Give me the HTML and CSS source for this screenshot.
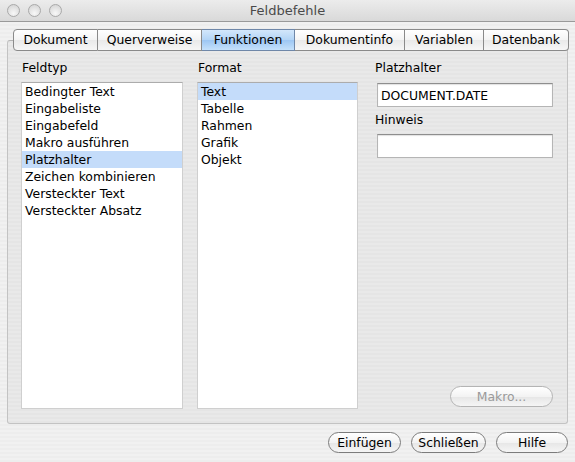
FILE: index.html
```html
<!DOCTYPE html>
<html lang="de">
<head>
<meta charset="utf-8">
<title>Feldbefehle</title>
<link rel="stylesheet" href="styles.css">
</head>
<body>
<div class="window">
  <div class="titlebar">
    <div class="lights">
      <span class="light"></span><span class="light"></span><span class="light"></span>
    </div>
    <div class="title">Feldbefehle</div>
    <div></div>
  </div>
  <div class="content">
    <div class="tabs">
      <div class="tab t1">Dokument</div>
      <div class="tab t2">Querverweise</div>
      <div class="tab t3 active">Funktionen</div>
      <div class="tab t4">Dokumentinfo</div>
      <div class="tab t5">Variablen</div>
      <div class="tab t6">Datenbank</div>
    </div>
    <div class="panel">
      <div class="col col1">
        <div class="label">Feldtyp</div>
        <ul class="list">
          <li>Bedingter Text</li>
          <li>Eingabeliste</li>
          <li>Eingabefeld</li>
          <li>Makro ausführen</li>
          <li class="sel">Platzhalter</li>
          <li>Zeichen kombinieren</li>
          <li>Versteckter Text</li>
          <li>Versteckter Absatz</li>
        </ul>
      </div>
      <div class="col col2">
        <div class="label">Format</div>
        <ul class="list">
          <li class="sel">Text</li>
          <li>Tabelle</li>
          <li>Rahmen</li>
          <li>Grafik</li>
          <li>Objekt</li>
        </ul>
      </div>
      <div class="col col3">
        <div class="label">Platzhalter</div>
        <div class="field">DOCUMENT.DATE</div>
        <div class="label label2">Hinweis</div>
        <div class="field"></div>
        <button class="btn makro" disabled>Makro...</button>
      </div>
    </div>
    <div class="buttons">
      <button class="btn b-einf">Einfügen</button>
      <button class="btn b-schl">Schließen</button>
      <button class="btn b-hilfe">Hilfe</button>
    </div>
  </div>
</div>
</body>
</html>
```

FILE: styles.css
```css
* { box-sizing: border-box; }
html, body {
  margin: 0;
  padding: 0;
  width: 575px;
  height: 462px;
  overflow: hidden;
}
body {
  font-family: "DejaVu Sans", "Liberation Sans", sans-serif;
  font-size: 12px;
  color: #000;
}
.window {
  width: 575px;
  height: 462px;
  background: repeating-linear-gradient(to bottom, #ededed 0, #ededed 2px, #f1f1f1 2px, #f1f1f1 4px);
  display: flex;
  flex-direction: column;
}
.titlebar {
  height: 22px;
  display: grid;
  grid-template-columns: 1fr auto 1fr;
  align-items: center;
  background: linear-gradient(to bottom, #ececec, #d9d9d9);
  border-bottom: 1px solid #9a9a9a;
}
.lights {
  display: flex;
  gap: 8px;
  padding-left: 7px;
  padding-bottom: 1px;
}
.light {
  width: 13px;
  height: 13px;
  border-radius: 50%;
  border: 1px solid #a9a9a9;
  background: radial-gradient(circle at 50% 75%, #f8f8f8 0, #e2e2e2 55%, #cfcfcf 100%);
}
.title {
  font-size: 13px;
  color: #4a4a4a;
  padding-bottom: 1px;
}
.content {
  flex: 1;
  display: flex;
  flex-direction: column;
}
.tabs {
  display: flex;
  margin: 7px 0 -11px 13px;
  height: 22px;
  position: relative;
  z-index: 1;
}
.tab {
  height: 22px;
  border: 1px solid #8a8a8a;
  border-left: none;
  background: linear-gradient(to bottom, #ffffff 0%, #f4f4f4 50%, #e9e9e9 51%, #f6f6f6 100%);
  display: flex;
  align-items: center;
  justify-content: center;
  font-size: 12.4px;
  padding-bottom: 1px;
}
.tab.t1 { width: 85px; border-left: 1px solid #8a8a8a; border-radius: 4px 0 0 4px; }
.tab.t2 { width: 104px; }
.tab.t3 { width: 93px; }
.tab.t4 { width: 110px; }
.tab.t5 { width: 79px; }
.tab.t6 { width: 85px; border-radius: 0 4px 4px 0; }
.tab.active {
  background: linear-gradient(to bottom, #d3e7fb 0%, #b2d4f6 50%, #9cc6f3 51%, #c5e1fb 100%);
  border-color: #6f87a8;
}
.panel {
  margin: 0 7px 0 7px;
  height: 384px;
  border: 1px solid #c3c3c3;
  border-top-color: #b3b3b3;
  border-radius: 3px;
  background: repeating-linear-gradient(to bottom, #e5e5e5 0, #e5e5e5 2px, #e9e9e9 2px, #e9e9e9 4px);
  display: grid;
  grid-template-columns: 162px 161px 181px;
  column-gap: 14px;
  padding: 19px 0 14px 13px;
}
.col3 { padding-left: 5px; }
.col {
  display: flex;
  flex-direction: column;
}
.label {
  font-size: 12.4px;
  height: 22px;
  padding-left: 1px;
}
.col3 .label { padding-left: 0; margin-left: -2px; }
.list {
  list-style: none;
  margin: 0;
  padding: 0;
  flex: 1;
  background: #fff;
  border: 1px solid #cfcfcf;
  border-top-color: #acacac;
}
.list li {
  height: 17px;
  line-height: 17px;
  padding-left: 3px;
  white-space: nowrap;
  font-size: 12.4px;
}
.list li.sel { background: #c4dcfa; }
.field {
  height: 24px;
  margin-top: 1px;
  background: #fff;
  border: 1px solid #b5b5b5;
  border-top-color: #8e8e8e;
  box-shadow: inset 0 1px 1px rgba(0,0,0,0.12);
  padding: 4px 3px 0 3px;
  font-size: 12.4px;
}
.label2 { height: 26px; padding-top: 5px; }
.btn {
  font-family: "DejaVu Sans", "Liberation Sans", sans-serif;
  font-size: 12.4px;
  height: 21px;
  border: 1px solid #7c7c7c;
  border-radius: 11px;
  background: linear-gradient(to bottom, #ffffff 0%, #f3f3f3 50%, #e6e6e6 51%, #f5f5f5 100%);
  color: #000;
  padding: 0 0 1px 0;
}
.makro {
  margin-top: auto;
  align-self: flex-end;
  width: 103px;
  margin-bottom: 2px;
  color: #9a9a9a;
  border-color: #b4b4b4;
}
.buttons {
  display: flex;
  justify-content: flex-end;
  padding: 8px 7px 0 0;
  gap: 10px;
}
.b-einf { width: 73px; }
.b-schl { width: 75px; }
.b-hilfe { width: 72px; }
```
